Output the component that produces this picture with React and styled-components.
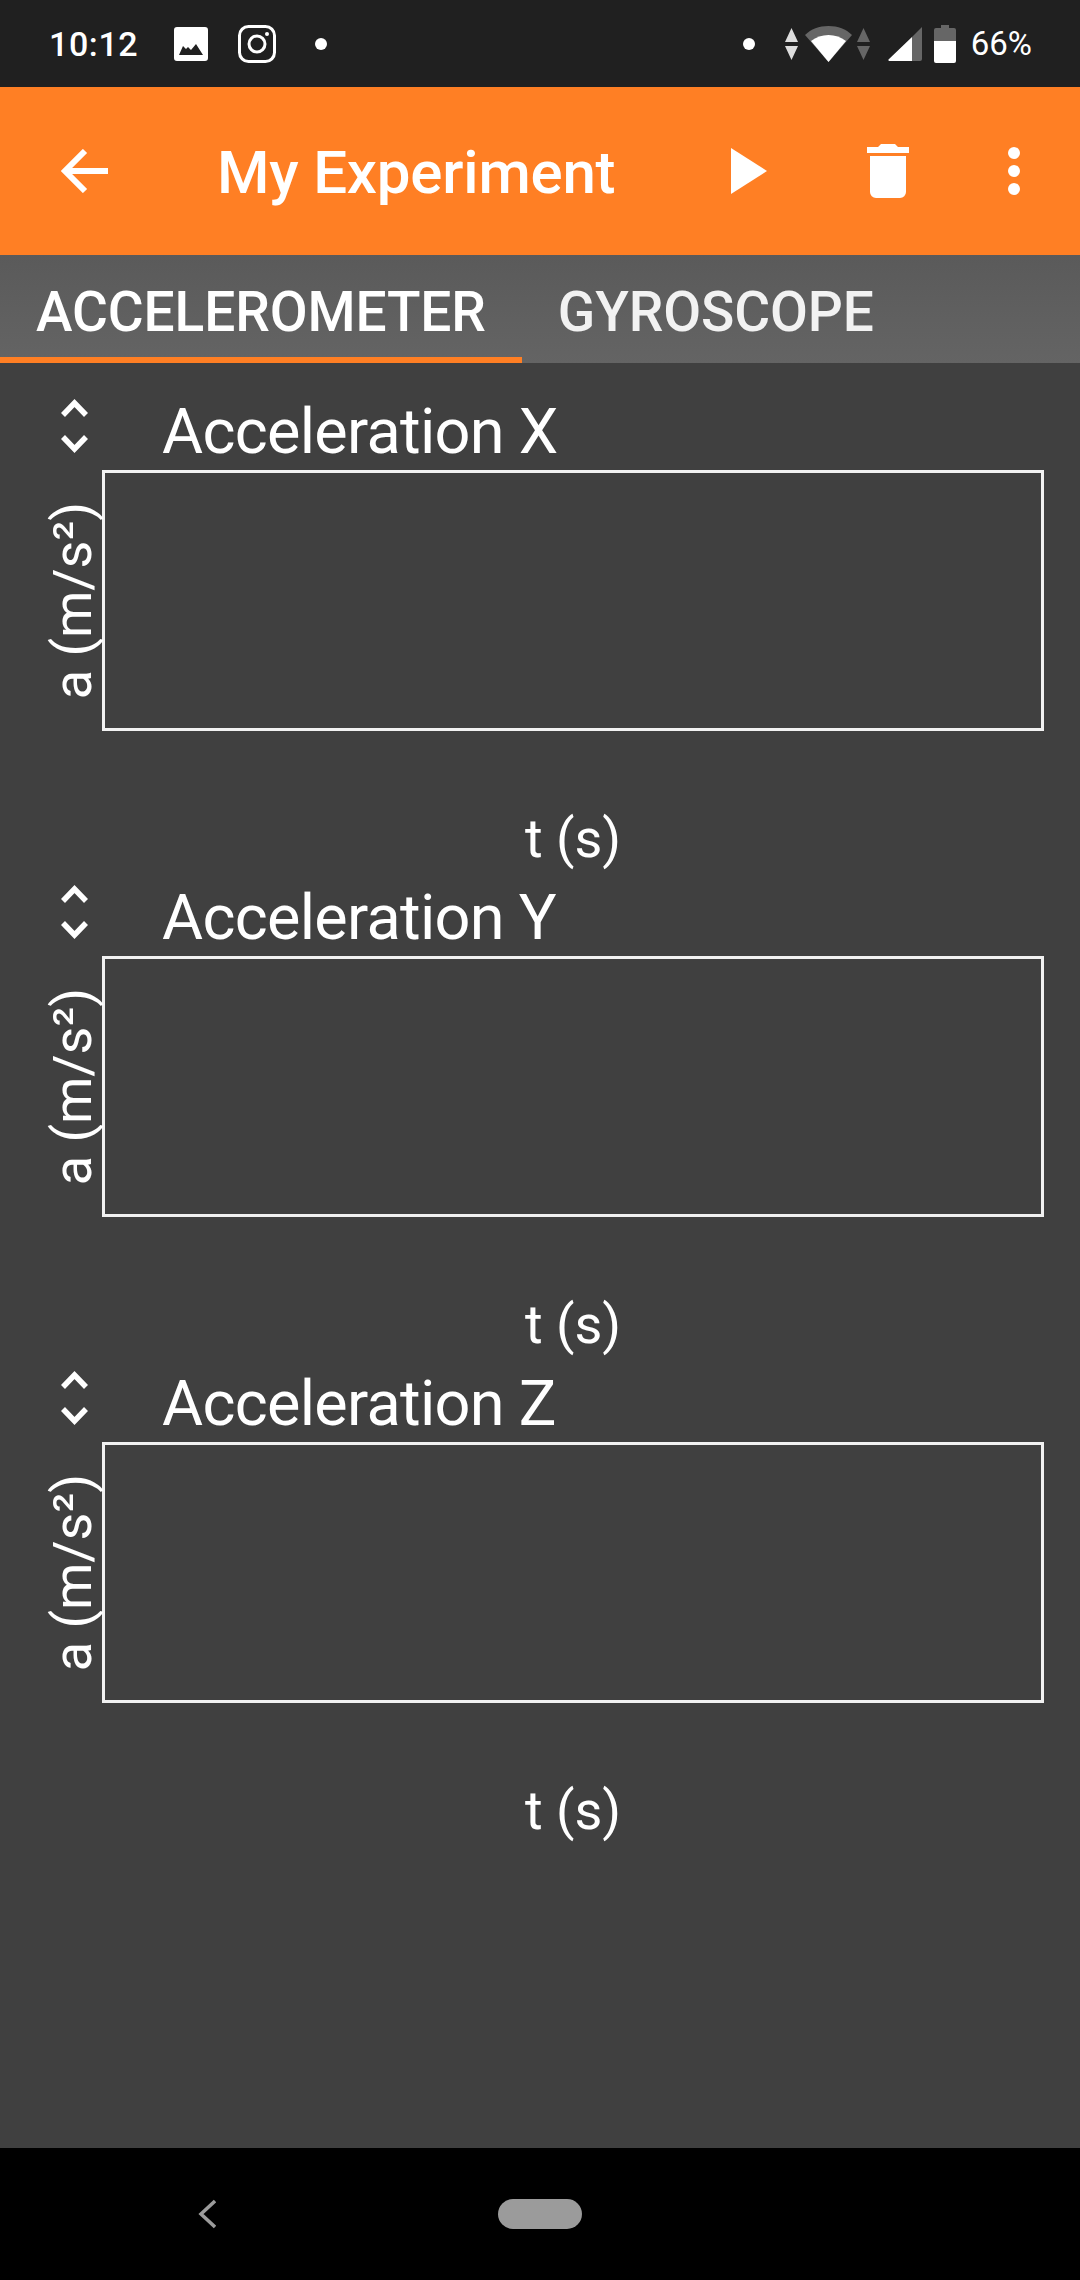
import React from "react";
import styled, { createGlobalStyle } from "styled-components";

const GlobalStyle = createGlobalStyle`
  html, body {
    margin: 0;
    padding: 0;
    background: #404040;
  }
  * {
    box-sizing: border-box;
  }
`;

const charts = ["Acceleration X", "Acceleration Y", "Acceleration Z"];

const App = () => {
  return (
    <Screen>
      <GlobalStyle />
      <StatusBar>
        <StatusGroup>
          <Time>10:12</Time>
          <svg width="34" height="34" viewBox="0 0 34 34" style={{ marginLeft: 36 }}>
            <path fill="#fff" fillRule="evenodd" d="M3 0h28a3 3 0 0 1 3 3v28a3 3 0 0 1-3 3H3a3 3 0 0 1-3-3V3a3 3 0 0 1 3-3zM5 28h24l-7-11-5 6-3-3-2 2-3-3z" />
          </svg>
          <svg width="38" height="38" viewBox="0 0 38 38" fill="none" stroke="#fff" style={{ marginLeft: 30 }}>
            <rect x="1.5" y="1.5" width="35" height="35" rx="9" strokeWidth="3" />
            <circle cx="19" cy="19" r="8" strokeWidth="3" />
            <circle cx="29" cy="9" r="2" fill="#fff" stroke="none" />
          </svg>
          <Dot $ml={39} />
        </StatusGroup>
        <StatusGroup>
          <Dot />
          <svg width="13" height="32" viewBox="0 0 13 32" style={{ marginLeft: 30 }}>
            <path fill="#ddd" d="M6.5 0l6.5 14H0zM0 18h13L6.5 32z" />
          </svg>
          <svg width="47" height="36" viewBox="0 0 47 36" style={{ marginLeft: 7 }}>
            <path fill="#666" d="M0 9C6 3 14 0 23.500 0S41 3 47 9L23.500 36z" />
            <path fill="#fff" d="M6 15c5-4 11-6 17.500-6S36 11 41 15L23.500 36z" />
          </svg>
          <svg width="13" height="32" viewBox="0 0 13 32" style={{ marginLeft: 5 }}>
            <path fill="#666" d="M6.500 0l6.500 14H0zM0 18h13L6.500 32z" />
          </svg>
          <svg width="34" height="34" viewBox="0 0 34 34" style={{ marginLeft: 18 }}>
            <path fill="#666" d="M34 0v32a2 2 0 0 1-2 2H24V10z" />
            <path fill="#fff" d="M24 10v24H1.500a1 1 0 0 1-1-1.500z" />
          </svg>
          <svg width="22" height="38" viewBox="0 0 22 38" style={{ marginLeft: 12 }}>
            <path fill="#666" d="M7 0h8v3h5a2 2 0 0 1 2 2v11H0V5a2 2 0 0 1 2-2h5z" />
            <path fill="#fff" d="M0 16h22v20a2 2 0 0 1-2 2H2a2 2 0 0 1-2-2z" />
          </svg>
          <Battery>66%</Battery>
        </StatusGroup>
      </StatusBar>
      <AppBar>
        <svg width="48" height="44" viewBox="0 0 48 44" fill="none" stroke="#fff" strokeWidth="6">
          <path d="M48 22H5M25 2L5 22l20 20" />
        </svg>
        <Title>My Experiment</Title>
        <AppActions>
          <svg width="36" height="46" viewBox="0 0 36 46">
            <path fill="#fff" d="M0 0l36 23L0 46z" />
          </svg>
          <svg width="42" height="54" viewBox="0 0 42 54" style={{ marginLeft: 100 }}>
            <path fill="#fff" d="M14 0h14l3 3h11v6H0V3h11zM3 12h36v36a6 6 0 0 1-6 6H9a6 6 0 0 1-6-6z" />
          </svg>
          <svg width="12" height="48" viewBox="0 0 12 48" style={{ marginLeft: 99 }}>
            <g fill="#fff">
              <circle cx="6" cy="6" r="6" />
              <circle cx="6" cy="24" r="6" />
              <circle cx="6" cy="42" r="6" />
            </g>
          </svg>
        </AppActions>
      </AppBar>
      <Tabs>
        <Tab $active>ACCELEROMETER</Tab>
        <Tab>GYROSCOPE</Tab>
      </Tabs>
      <Content>
        {charts.map((name) => (
          <ChartSection key={name}>
            <ChartHeader>
              <svg width="27" height="54" viewBox="0 0 27 54" fill="none" stroke="#fff" strokeWidth="5.500">
                <path d="M2 16L13.500 4 25 16M2 38l11.500 12L25 38" />
              </svg>
              <ChartTitle>{name}</ChartTitle>
            </ChartHeader>
            <ChartRow>
              <YAxis>a (m/s²)</YAxis>
              <Plot />
            </ChartRow>
            <XAxis>t (s)</XAxis>
          </ChartSection>
        ))}
      </Content>
      <NavBar>
        <svg width="18" height="30" viewBox="0 0 18 30" fill="none" stroke="#9b9b9b" strokeWidth="3.500">
          <path d="M17 2L3 15l14 13" />
        </svg>
        <HomePill />
      </NavBar>
    </Screen>
  );
};

export default App;

const Screen = styled.div`
  width: 1080px;
  height: 2280px;
  display: flex;
  flex-direction: column;
  overflow: hidden;
  background: #404040;
  color: #fff;
  font-family: Roboto, "Liberation Sans", sans-serif;
`;

const StatusBar = styled.div`
  height: 87px;
  flex: none;
  display: flex;
  align-items: center;
  justify-content: space-between;
  padding: 0 48px 0 49px;
  background: #202020;
`;

const StatusGroup = styled.div`
  display: flex;
  align-items: center;
`;

const Time = styled.span`
  font-size: 34px;
  font-weight: 500;
  letter-spacing: 0.6px;
`;

const Battery = styled.span`
  font-size: 33px;
  margin-left: 15px;
`;

const Dot = styled.span`
  width: 12px;
  height: 12px;
  border-radius: 50%;
  background: #fff;
  margin-left: ${({ $ml }) => $ml || 0}px;
`;

const AppBar = styled.div`
  height: 168px;
  flex: none;
  display: flex;
  align-items: center;
  padding: 0 60px;
  background: #ff7f24;
`;

const Title = styled.h1`
  margin: 2px 0 0 109px;
  font-size: 60px;
  font-weight: 500;
  letter-spacing: -0.2px;
  white-space: nowrap;
`;

const AppActions = styled.div`
  margin-left: auto;
  display: flex;
  align-items: center;
`;

const Tabs = styled.div`
  height: 108px;
  flex: none;
  display: flex;
  background: linear-gradient(#5a5a5a, #646464);
`;

const Tab = styled.div`
  display: flex;
  align-items: center;
  padding: 12px 36px 0;
  font-size: 55px;
  font-weight: 500;
  letter-spacing: -0.1px;
  white-space: nowrap;
  color: ${({ $active }) => ($active ? "#fff" : "#f2f2f2")};
  border-bottom: 6px solid ${({ $active }) => ($active ? "#ff7f24" : "transparent")};
`;

const Content = styled.div`
  flex: 1;
  min-height: 0;
`;

const ChartSection = styled.section`
  height: 486px;
  padding-right: 36px;
`;

const ChartHeader = styled.div`
  height: 107px;
  display: flex;
  align-items: flex-start;
  padding: 36px 0 0 61px;
`;

const ChartTitle = styled.h2`
  margin: -2px 0 0 74px;
  font-size: 63px;
  font-weight: 400;
  line-height: 70px;
  letter-spacing: -0.7px;
  white-space: nowrap;
`;

const ChartRow = styled.div`
  display: flex;
  align-items: center;
`;

const YAxis = styled.div`
  width: 64px;
  margin: 0 -3px 0 41px;
  flex: none;
  display: flex;
  justify-content: flex-end;
  align-items: center;
  writing-mode: vertical-rl;
  transform: rotate(180deg);
  font-size: 54px;
  line-height: 64px;
  white-space: nowrap;
`;

const Plot = styled.div`
  flex: 1;
  height: 261px;
  border: 3px solid #f2f2f2;
`;

const XAxis = styled.div`
  margin: 75px 0 0 102px;
  text-align: center;
  font-size: 54px;
  line-height: 66px;
`;

const NavBar = styled.div`
  height: 132px;
  flex: none;
  display: flex;
  align-items: center;
  padding-left: 198px;
  background: #000;
`;

const HomePill = styled.div`
  width: 84px;
  height: 30px;
  margin-left: 282px;
  border-radius: 15px;
  background: #9b9b9b;
`;
